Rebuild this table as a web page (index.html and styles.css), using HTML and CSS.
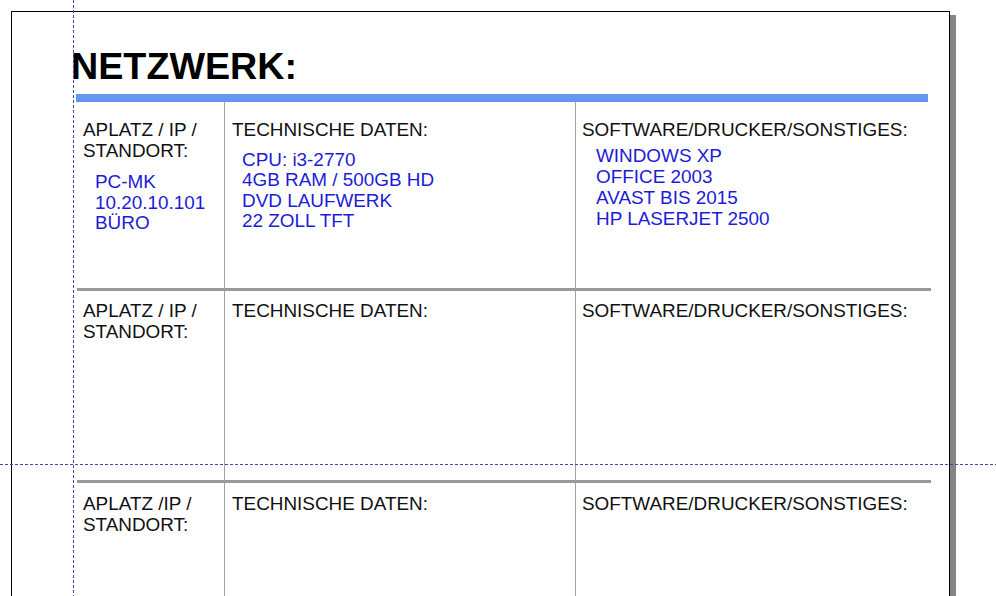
FILE: index.html
```html
<!DOCTYPE html>
<html lang="de">
<head>
<meta charset="utf-8">
<title>Netzwerk</title>
<link rel="stylesheet" href="styles.css">
</head>
<body>
<div class="desk">
  <div class="page">
    <h1 class="title">NETZWERK:</h1>
    <div class="bar"></div>
    <div class="table">
      <div class="row row-first">
        <div class="cell cell-a">
          <p class="label">APLATZ / IP /<br>STANDORT:</p>
          <p class="value value-a">PC-MK<br>10.20.10.101<br>BÜRO</p>
        </div>
        <div class="cell cell-b">
          <p class="label">TECHNISCHE DATEN:</p>
          <p class="value value-b">CPU: i3-2770<br>4GB RAM / 500GB HD<br>DVD LAUFWERK<br>22 ZOLL TFT</p>
        </div>
        <div class="cell cell-c">
          <p class="label">SOFTWARE/DRUCKER/SONSTIGES:</p>
          <p class="value value-c">WINDOWS XP<br>OFFICE 2003<br>AVAST BIS 2015<br>HP LASERJET 2500</p>
        </div>
      </div>
      <div class="row row-second">
        <div class="cell cell-a"><p class="label">APLATZ / IP /<br>STANDORT:</p></div>
        <div class="cell cell-b"><p class="label">TECHNISCHE DATEN:</p></div>
        <div class="cell cell-c"><p class="label">SOFTWARE/DRUCKER/SONSTIGES:</p></div>
      </div>
      <div class="row row-third">
        <div class="cell cell-a"><p class="label">APLATZ /IP /<br>STANDORT:</p></div>
        <div class="cell cell-b"><p class="label">TECHNISCHE DATEN:</p></div>
        <div class="cell cell-c"><p class="label">SOFTWARE/DRUCKER/SONSTIGES:</p></div>
      </div>
    </div>
  </div>
  <div class="guide guide-v"></div>
  <div class="guide guide-h"></div>
</div>
</body>
</html>
```

FILE: styles.css
```css
html, body {
  margin: 0;
  padding: 0;
  background: #ffffff;
  overflow: hidden;
  height: 596px;
}

.desk {
  position: relative;
  width: 996px;
  height: 596px;
  overflow: hidden;
  padding-top: 11px;
  padding-left: 11px;
  box-sizing: border-box;
  font-family: "Liberation Sans", Arial, sans-serif;
}

.page {
  width: 939px;
  height: 1000px;
  border: 1px solid #000;
  background: #fff;
  box-shadow: 6px 4px 0 #858585;
  padding-left: 59px;
  box-sizing: border-box;
}

.title {
  margin: 33px 0 0 0;
  font-size: 37.7px;
  line-height: 42px;
  font-weight: bold;
  color: #000;
}

.bar {
  margin: 7px 0 0 5px;
  width: 852px;
  height: 8px;
  background: #6595ee;
}

.table {
  margin-left: 6px;
  width: 854px;
}

.row {
  display: grid;
  grid-template-columns: 148px 351px 355px;
  border-bottom: 3px solid #9a9a9a;
}

.row-first { height: 186px; }
.row-second { height: 189px; }
.row-third { height: 200px; border-bottom: none; }

.cell {
  box-sizing: border-box;
  padding-top: 9px;
}

.row-first .cell { padding-top: 17px; }
.row-third .cell { padding-top: 10px; }

.cell-a { border-right: 1px solid #a2a2a2; padding-left: 6px; }
.cell-b { border-right: 1px solid #a2a2a2; padding-left: 7px; }
.cell-c { padding-left: 6px; }

.label {
  margin: 0;
  font-size: 18.9px;
  line-height: 21px;
  color: #111;
}

.value {
  margin: 0;
  font-size: 18.9px;
  line-height: 21px;
  color: #1c1cd6;
}

.value-a { margin-top: 11px; padding-left: 12px; line-height: 20.5px; }
.value-b { margin-top: 10px; padding-left: 10px; line-height: 20.3px; }
.value-c { margin-top: 5px; padding-left: 14px; line-height: 21px; }

.guide {
  position: absolute;
}

.guide-v {
  left: 73px;
  top: 0;
  width: 1px;
  height: 596px;
  background: repeating-linear-gradient(to bottom, #4646ae 0 3px, transparent 3px 5px);
}

.guide-h {
  left: 0;
  top: 464px;
  width: 996px;
  height: 1px;
  background: repeating-linear-gradient(to right, #4646ae 0 3px, transparent 3px 5px);
}
```
